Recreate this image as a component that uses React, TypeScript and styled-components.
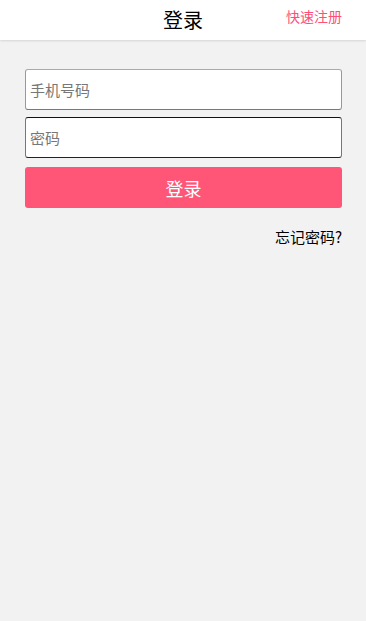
import React from 'react';
import styled, { createGlobalStyle } from 'styled-components';

const GlobalStyle = createGlobalStyle`
  html, body {
    margin: 0;
    padding: 0;
    background-color: #f2f2f2;
    font-family: "Noto Sans CJK SC", "Noto Sans", sans-serif;
  }
`;

const Page = styled.div`
  min-height: 621px;
  background-color: #f2f2f2;
`;

const Header = styled.header`
  position: relative;
  height: 40px;
  background-color: #fff;
  box-shadow: 0 1px 2px rgba(0, 0, 0, 0.12);
  display: flex;
  align-items: center;
  justify-content: center;
`;

const Title = styled.h1`
  margin: 0;
  font-size: 20px;
  font-weight: 400;
  color: #000;
  line-height: 32px;
`;

const RegisterLink = styled.a`
  position: absolute;
  right: 24px;
  top: 5px;
  font-size: 14px;
  line-height: 22px;
  color: #ff4f77;
  text-decoration: none;
`;

const Form = styled.form`
  display: flex;
  flex-direction: column;
  padding: 29px 24px 0 25px;
  gap: 7px;
`;

const Input = styled.input<{ $focused?: boolean }>`
  box-sizing: border-box;
  height: 41px;
  width: 100%;
  padding: 0 4px;
  font-size: 15px;
  font-family: inherit;
  background: #fff;
  border-radius: 3px;
  border: 1px solid ${p => (p.$focused ? '#777' : '#999')};
  border-top-color: ${p => (p.$focused ? '#111' : '#aaa')};
  border-bottom-color: ${p => (p.$focused ? '#222' : '#777')};
  outline: none;

  &::placeholder {
    color: #777;
  }
`;

const SubmitButton = styled.button`
  margin-top: 2px;
  height: 41px;
  border: none;
  border-radius: 3px;
  background-color: #ff5577;
  color: #fff;
  font-size: 18px;
  font-family: inherit;
  cursor: pointer;
`;

const Forgot = styled.div`
  display: flex;
  justify-content: flex-end;
  padding: 18px 24px 0 0;
`;

const ForgotLink = styled.a`
  font-size: 15px;
  color: #000;
  text-decoration: none;
  line-height: 22px;
`;

export default function App() {
  return (
    <Page>
      <GlobalStyle />
      <Header>
        <Title>登录</Title>
        <RegisterLink href="#">快速注册</RegisterLink>
      </Header>
      <Form onSubmit={e => e.preventDefault()}>
        <Input type="tel" placeholder="手机号码" />
        <Input type="password" placeholder="密码" $focused />
        <SubmitButton type="submit">登录</SubmitButton>
      </Form>
      <Forgot>
        <ForgotLink href="#">忘记密码?</ForgotLink>
      </Forgot>
    </Page>
  );
}
